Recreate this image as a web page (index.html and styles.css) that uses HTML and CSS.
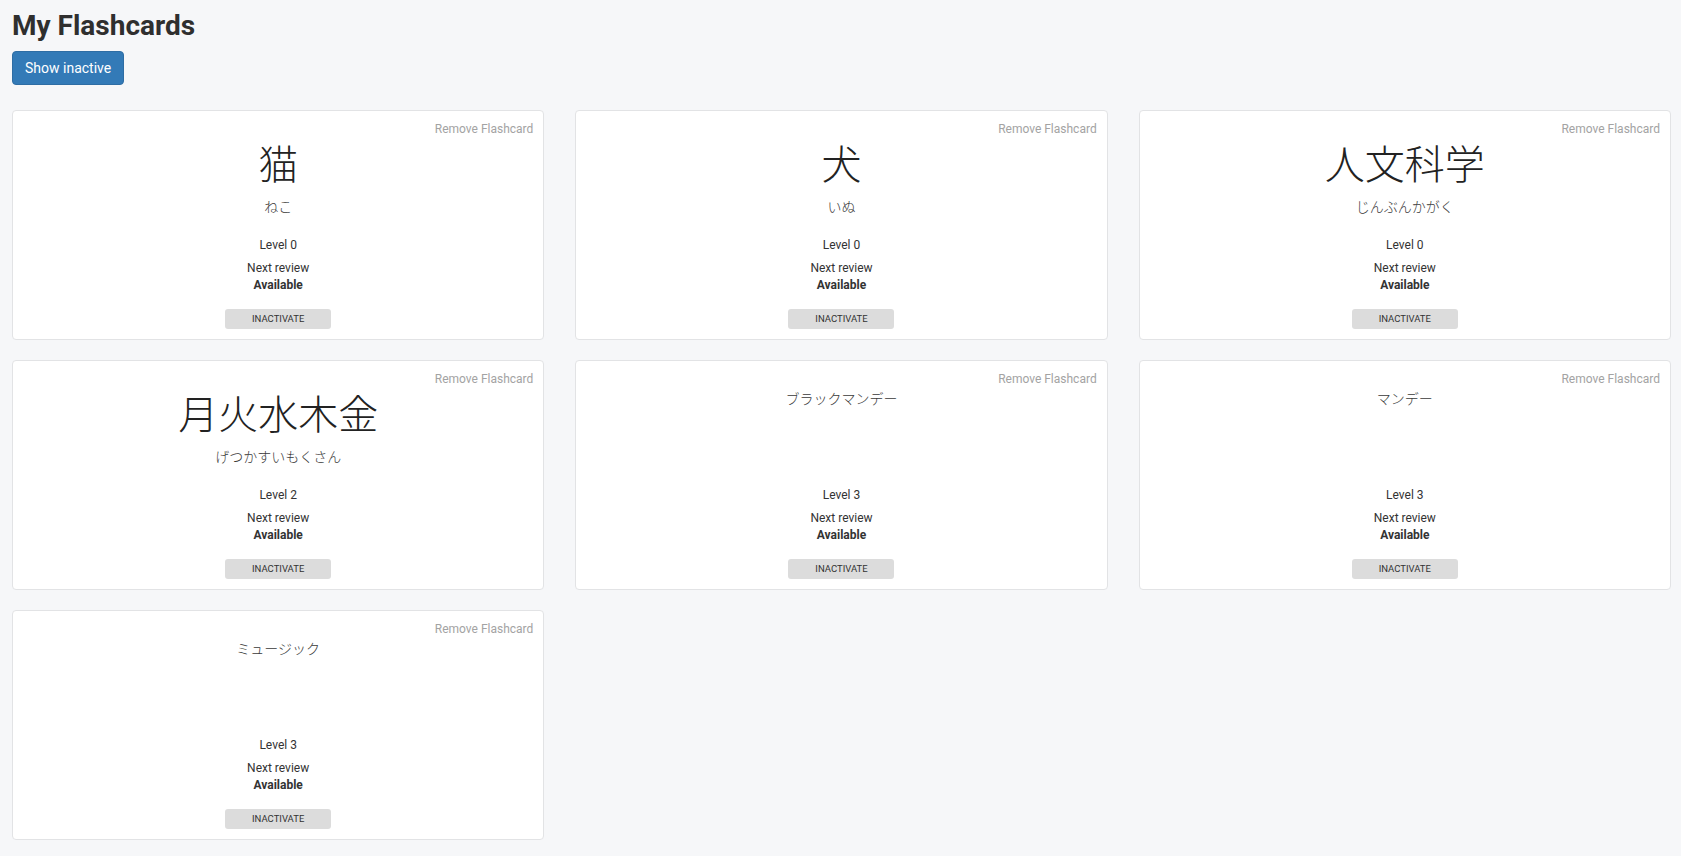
FILE: index.html
```html
<!DOCTYPE html>
<html lang="en">
<head>
<meta charset="utf-8">
<title>My Flashcards</title>
<link rel="stylesheet" href="styles.css">
</head>
<body>
<div class="page">
  <h1 class="title">My Flashcards</h1>
  <div class="toolbar">
    <button class="btn-primary">Show inactive</button>
  </div>

  <div class="grid">
    <div class="card">
      <div class="card-head"><span class="remove">Remove Flashcard</span></div>
      <div class="front">
        <div class="word">猫</div>
        <div class="reading">ねこ</div>
      </div>
      <div class="stats">
        <div class="level">Level 0</div>
        <div class="review">Next review</div>
        <div class="avail">Available</div>
      </div>
      <button class="btn-inactivate">Inactivate</button>
    </div>

    <div class="card">
      <div class="card-head"><span class="remove">Remove Flashcard</span></div>
      <div class="front">
        <div class="word">犬</div>
        <div class="reading">いぬ</div>
      </div>
      <div class="stats">
        <div class="level">Level 0</div>
        <div class="review">Next review</div>
        <div class="avail">Available</div>
      </div>
      <button class="btn-inactivate">Inactivate</button>
    </div>

    <div class="card">
      <div class="card-head"><span class="remove">Remove Flashcard</span></div>
      <div class="front">
        <div class="word">人文科学</div>
        <div class="reading">じんぶんかがく</div>
      </div>
      <div class="stats">
        <div class="level">Level 0</div>
        <div class="review">Next review</div>
        <div class="avail">Available</div>
      </div>
      <button class="btn-inactivate">Inactivate</button>
    </div>

    <div class="card">
      <div class="card-head"><span class="remove">Remove Flashcard</span></div>
      <div class="front">
        <div class="word">月火水木金</div>
        <div class="reading">げつかすいもくさん</div>
      </div>
      <div class="stats">
        <div class="level">Level 2</div>
        <div class="review">Next review</div>
        <div class="avail">Available</div>
      </div>
      <button class="btn-inactivate">Inactivate</button>
    </div>

    <div class="card">
      <div class="card-head"><span class="remove">Remove Flashcard</span></div>
      <div class="front">
        <div class="reading">ブラックマンデー</div>
      </div>
      <div class="stats">
        <div class="level">Level 3</div>
        <div class="review">Next review</div>
        <div class="avail">Available</div>
      </div>
      <button class="btn-inactivate">Inactivate</button>
    </div>

    <div class="card">
      <div class="card-head"><span class="remove">Remove Flashcard</span></div>
      <div class="front">
        <div class="reading">マンデー</div>
      </div>
      <div class="stats">
        <div class="level">Level 3</div>
        <div class="review">Next review</div>
        <div class="avail">Available</div>
      </div>
      <button class="btn-inactivate">Inactivate</button>
    </div>

    <div class="card">
      <div class="card-head"><span class="remove">Remove Flashcard</span></div>
      <div class="front">
        <div class="reading">ミュージック</div>
      </div>
      <div class="stats">
        <div class="level">Level 3</div>
        <div class="review">Next review</div>
        <div class="avail">Available</div>
      </div>
      <button class="btn-inactivate">Inactivate</button>
    </div>
  </div>
</div>
</body>
</html>
```

FILE: styles.css
```css
* {
  box-sizing: border-box;
}

html, body {
  margin: 0;
  padding: 0;
  background: #f6f7f9;
}

body {
  font-family: Roboto, "Liberation Sans", "Noto Sans CJK JP", sans-serif;
  color: #333;
}

.page {
  padding: 0 10px 0 12px;
}

.title {
  margin: 9px 0 0 0;
  font-size: 28px;
  line-height: 34px;
  font-weight: 700;
  color: #2f2f2f;
}

.toolbar {
  display: flex;
  margin-top: 8px;
}

.btn-primary {
  padding: 6px 12px;
  font-family: Roboto, "Liberation Sans", sans-serif;
  font-size: 14px;
  line-height: 20px;
  color: #fff;
  background: #337ab7;
  border: 1px solid #2e6da4;
  border-radius: 4px;
  cursor: pointer;
}

.grid {
  margin-top: 25px;
  display: grid;
  grid-template-columns: repeat(3, 1fr);
  column-gap: 31px;
  row-gap: 20px;
}

.card {
  height: 230px;
  background: #fff;
  border: 1px solid #e2e3e5;
  border-radius: 4px;
  padding: 10px;
  display: flex;
  flex-direction: column;
  align-items: center;
}

.card-head {
  align-self: stretch;
  display: flex;
  justify-content: flex-end;
  height: 17px;
}

.remove {
  font-size: 12px;
  line-height: 17px;
  color: #a3a3a3;
  cursor: pointer;
}

.front {
  display: flex;
  flex-direction: column;
  align-items: center;
}

.word {
  font-family: "Noto Sans CJK JP", "Noto Sans CJK SC", sans-serif;
  font-size: 40px;
  line-height: 48px;
  font-weight: 300;
  color: #222;
}

.reading {
  font-family: "Noto Sans CJK JP", "Noto Sans CJK SC", sans-serif;
  font-size: 14px;
  line-height: 20px;
  font-weight: 300;
  color: #3a3a3a;
}

.word + .reading {
  margin-top: 10px;
}

.stats {
  margin-top: auto;
  text-align: center;
  font-size: 12px;
  line-height: 17px;
  color: #333;
}

.level {
  margin-bottom: 6px;
}

.avail {
  font-weight: 700;
}

.btn-inactivate {
  margin-top: 15px;
  width: 106px;
  height: 20px;
  padding: 0;
  border: none;
  border-radius: 3px;
  background: #dcdcdc;
  color: #333;
  font-family: Roboto, "Liberation Sans", sans-serif;
  font-size: 9.5px;
  line-height: 20px;
  text-transform: uppercase;
  cursor: pointer;
}
```
